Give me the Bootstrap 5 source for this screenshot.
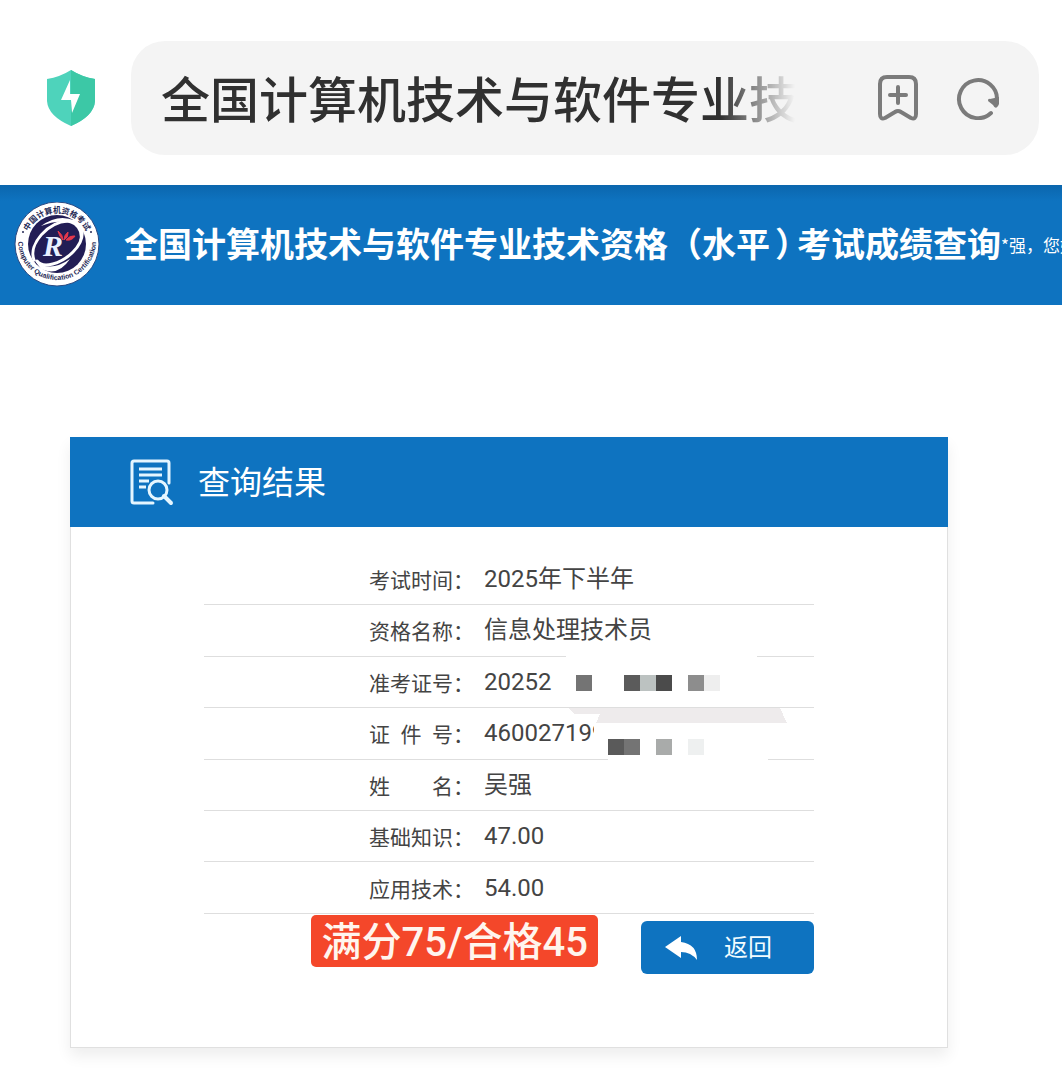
<!DOCTYPE html>
<html lang="zh-CN">
<head>
<meta charset="utf-8">
<meta name="viewport" content="width=device-width, initial-scale=1">
<title>全国计算机技术与软件专业技术资格（水平）考试成绩查询</title>
<link href="https://cdn.jsdelivr.net/npm/bootstrap@5.3.0/dist/css/bootstrap.min.css" rel="stylesheet">
<style>
  :root { --brand: #0e73c0; }
  body { font-family: Roboto, "Noto Sans CJK SC", sans-serif; color: #444; background: #fff; overflow-x: hidden; }
  .browser-bar { padding: 41px 23px 30px 46px; gap: 35px; }
  .shield { width: 50px; height: 56px; }
  .address { background: #f4f4f4; border-radius: 34px; height: 114px; padding: 0 39px 0 30px; }
  .address-text { font-family: "Noto Sans CJK SC", sans-serif; font-size: 49px; font-weight: 500; color: #303030; line-height: 72px; height: 76px; padding: 0 0 4px;
    width: 634px; min-width: 0; -webkit-mask-image: linear-gradient(to right, #000 560px, transparent 634px); mask-image: linear-gradient(to right, #000 560px, transparent 634px); outline: 0; }
  .bar-icons { gap: 37px; }
  .bar-icons button { line-height: 0; }
  .site-head { background: linear-gradient(#0b66ad, var(--brand) 16px); height: 120px; padding-left: 14px; gap: 24px; font-family: "Noto Sans CJK SC", sans-serif; }
  .site-title { font-size: 34px; font-weight: 700; line-height: 48px; padding-bottom: 4px; }
  .paren-end { font-feature-settings: "halt"; padding: 0 5px; }
  .hello { font-size: 17px; }
  .page-body { padding: 132px 114px 44px 70px; }
  .result { border: 1px solid #e0e0e0; border-top: 0; box-shadow: 0 8px 14px rgba(0,0,0,.07); }
  .result-head { background: var(--brand); height: 90px; padding-left: 60px; gap: 24px; margin: 0 -1px; }
  .result-head h2 { font-family: "Noto Sans CJK SC", sans-serif; font-size: 32px; font-weight: 400; line-height: 44px; padding-bottom: 4px; }
  .result-body { padding: 27px 133px 73px; }
  .score { height: 360px; font-size: 24px; line-height: 32px; }
  .score th, .score td { border-bottom: 1px solid #dedede; padding: 0; vertical-align: middle; white-space: nowrap; }
  .score th { width: 280px; font-size: 21px; font-weight: 400; text-align: right; padding-right: 10px; font-family: "Noto Sans CJK SC", sans-serif; }
  .spread { display: inline-flex; justify-content: space-between; width: 84px; }
  .cut { display: block; width: 110px; overflow: hidden; }
  .mosaic { position: absolute; left: 361px; top: 99px; }
  .actions { gap: 43px; padding-top: 1px; }
  .pass-note { background: #f4472a; color: #fff5ee; border-radius: 5px; font-size: 40px; font-weight: 500; line-height: 56px; height: 52px; padding: 0 10px; white-space: nowrap; }
  .back { background: var(--brand); color: #f2fcff; border: 0; border-radius: 6px; width: 173px; height: 53px; margin-top: 6px; padding: 0 0 0 23px; font-size: 24px; gap: 26px; line-height: 32px; }
</style>
</head>
<body>
<header class="browser-bar d-flex align-items-center">
  <svg class="shield flex-shrink-0" viewBox="0 0 50 56" role="img" aria-label="安全">
    <path d="M25 0Q36 7 49 9V31Q48 46 25 56Q2 46 1 31V9Q14 7 25 0Z" fill="#4ed3bb"/>
    <path d="M25 0Q36 7 49 9V31Q48 46 25 56Z" fill="#3cc8a6"/>
    <path d="M24 10L15 30H25L26 43L34 24H24Z" fill="#fff"/>
  </svg>
  <div class="address d-flex align-items-center justify-content-between flex-grow-1">
    <input class="address-text border-0 bg-transparent" type="text" readonly aria-label="网页标题" value="全国计算机技术与软件专业技">
    <div class="bar-icons d-flex align-items-center">
      <button class="btn p-0 border-0" type="button" aria-label="添加书签">
        <svg width="42" height="46" viewBox="0 0 42 46" fill="none" stroke="#7b7b7b" stroke-width="4" stroke-linecap="round" stroke-linejoin="round"><path d="M3 39V9Q3 2 10 2H32Q39 2 39 9V39Q39 45 34 43L24 37Q21 35 18 37L8 43Q3 45 3 39ZM21 12V28M13 20H29"/></svg>
      </button>
      <button class="btn p-0 border-0" type="button" aria-label="刷新">
        <svg width="44" height="44" viewBox="0 0 44 44"><path d="M35 37A19 19 0 1 1 41 24" fill="none" stroke="#7b7b7b" stroke-width="4" stroke-linecap="round"/><path d="M34 23L43 21V28Q40 35 37 29L32 25Q32 22 34 23Z" fill="#7b7b7b"/></svg>
      </button>
    </div>
  </div>
</header>

<div class="site-head d-flex align-items-center text-white text-nowrap overflow-hidden">
  <svg class="flex-shrink-0" width="86" height="86" viewBox="0 0 86 86" role="img" aria-label="中国计算机资格考试">
    <defs>
      <path id="arcTop" d="M11 43A32 32 0 0 1 75 43"/>
      <path id="arcBottom" d="M4 39A39 39 0 0 0 82 39"/>
    </defs>
    <circle cx="43" cy="42" r="42" fill="#fff" stroke="#2b4a83" stroke-width="1"/>
    <circle cx="43" cy="42" r="29" fill="#221d55"/>
    <path d="M20 58C14 42 34 20 54 19C72 18 72 37 59 50C47 62 29 67 23 59" fill="none" stroke="#fff" stroke-width="3" stroke-linecap="round"/>
    <path d="M27 24Q45 11 61 19Q72 27 65 40Q68 29 60 23Q47 16 27 24Z" fill="#fff"/>
    <path d="M21 59Q36 71 56 57Q44 75 27 67Z" fill="#fff"/>
    <text x="29" y="54" font-family="Liberation Serif, serif" font-size="30" font-weight="700" font-style="italic" fill="#e8f0ff">R</text>
    <path d="M44 29Q49 33 49 38Q45 34 44 29ZM50 38Q50 33 54 30Q55 35 50 38ZM52 38Q56 33 61 34Q58 39 52 38Z" fill="#e5384c" stroke="#e5384c"/>
    <text font-family="Noto Sans CJK SC, sans-serif" font-size="8" font-weight="700" fill="#252955" text-anchor="middle"><textPath href="#arcTop" startOffset="50%">中国计算机资格考试</textPath></text>
    <text font-family="Liberation Sans, sans-serif" font-size="7" font-weight="700" fill="#252955" text-anchor="middle"><textPath href="#arcBottom" startOffset="50%">Computer Qualification Certification</textPath></text>
    <circle cx="9" cy="30" r="1" fill="#252955"/><circle cx="77" cy="30" r="1" fill="#252955"/>
  </svg>
  <div class="d-flex align-items-center">
    <h1 class="site-title m-0">全国计算机技术与软件专业技术资格（水平<span class="paren-end">）</span>考试成绩查询</h1>
    <span class="hello">*强，您好</span>
  </div>
</div>

<main class="page-body">
  <section class="result bg-white">
    <div class="result-head d-flex align-items-center text-white">
      <svg width="44" height="48" viewBox="0 0 44 48" fill="none" stroke="#e5f6ff" stroke-width="3" aria-hidden="true"><path d="M23 45H4Q2 45 2 43V5Q2 3 4 3H37Q39 3 39 5V25" stroke-linecap="round"/><path d="M9 11H32M9 17H32M9 23H19M9 29H16" /><circle cx="28" cy="32" r="9"/><path d="M34 38L41 45" stroke-width="4" stroke-linecap="round"/></svg>
      <h2 class="m-0">查询结果</h2>
    </div>
    <div class="result-body">
      <div class="position-relative">
        <table class="score w-100">
          <tbody>
            <tr><th scope="row">考试时间：</th><td>2025年下半年</td></tr>
            <tr><th scope="row">资格名称：</th><td>信息处理技术员</td></tr>
            <tr><th scope="row">准考证号：</th><td>20252</td></tr>
            <tr><th scope="row"><span class="spread"><span>证</span><span>件</span><span>号</span></span>：</th><td><span class="cut">460027199</span></td></tr>
            <tr><th scope="row"><span class="spread"><span>姓</span><span>名</span></span>：</th><td>吴强</td></tr>
            <tr><th scope="row">基础知识：</th><td>47.00</td></tr>
            <tr><th scope="row">应用技术：</th><td>54.00</td></tr>
          </tbody>
        </table>
        <svg class="mosaic" width="226" height="112" viewBox="565 653 226 112" shape-rendering="crispEdges" aria-hidden="true">
          <path d="M566 653H757V660H566ZM608 755H768V763H608Z" fill="#fff"/>
          <path d="M568 708H780L787 723H596L600 714H575Z" fill="#eeebec"/>
          <path d="M576 675h16v16h-16z" fill="#747474"/>
          <path d="M624 675h16v16h-16z" fill="#5b5b5b"/>
          <path d="M640 675h16v16h-16z" fill="#bcc2c1"/>
          <path d="M656 675h16v16h-16z" fill="#4b4b4b"/>
          <path d="M688 675h16v16h-16z" fill="#8d8d8d"/>
          <path d="M704 675h16v16h-16z" fill="#eee"/>
          <path d="M608 739h16v16h-16z" fill="#5a5a5a"/>
          <path d="M624 739h16v16h-16z" fill="#747474"/>
          <path d="M656 739h16v16h-16z" fill="#a9abaa"/>
          <path d="M688 739h16v16h-16z" fill="#eef0f0"/>
        </svg>
      </div>
      <div class="actions d-flex justify-content-end align-items-start">
        <div class="pass-note">满分75/合格45</div>
        <button class="back btn d-flex align-items-center" type="button">
          <svg width="34" height="26" viewBox="0 0 34 26" aria-hidden="true"><path d="M1 12L17 1V7Q33 9 33 25Q27 17 17 17V23Z" fill="#fff"/></svg>
          返回
        </button>
      </div>
    </div>
  </section>
</main>
<script src="https://cdn.jsdelivr.net/npm/bootstrap@5.3.0/dist/js/bootstrap.bundle.min.js"></script>
</body>
</html>
